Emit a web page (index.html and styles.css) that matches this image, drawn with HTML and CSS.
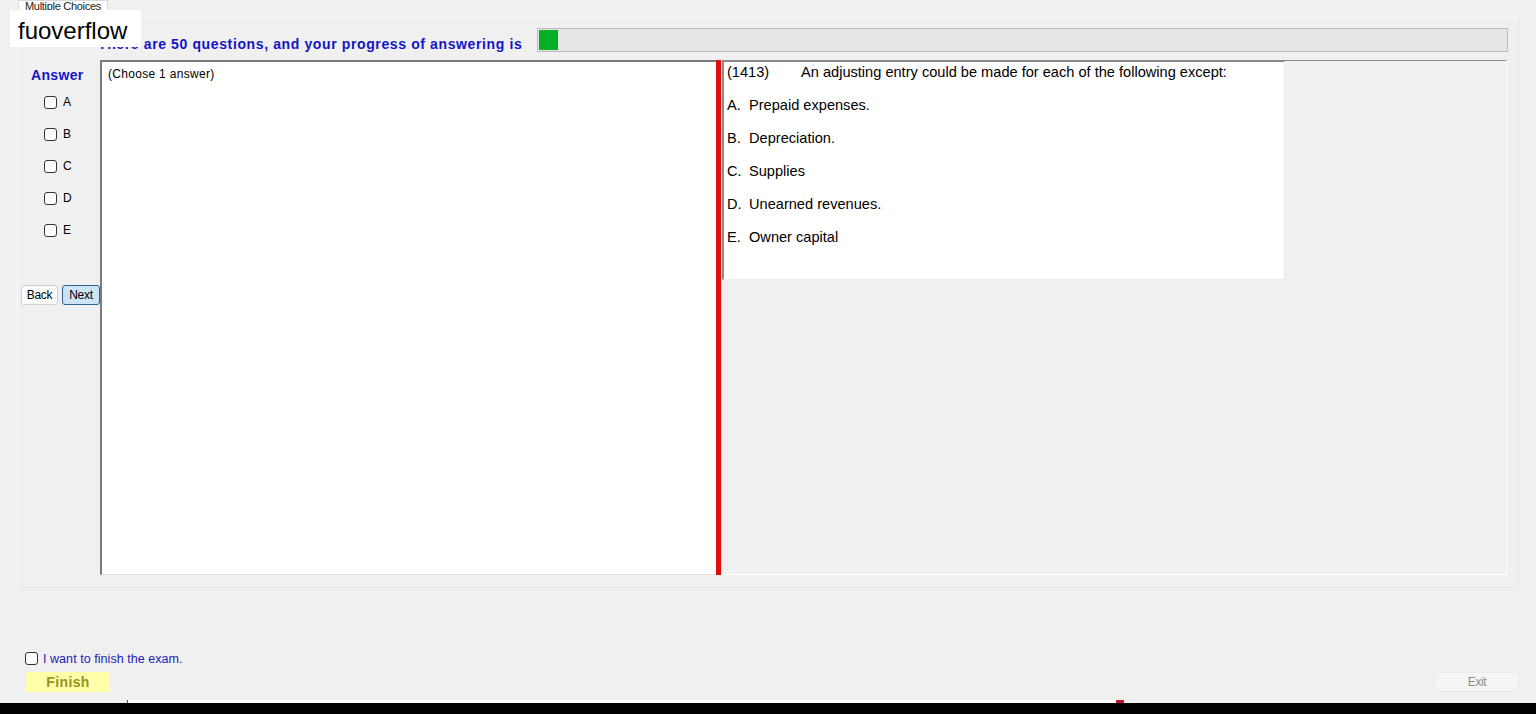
FILE: index.html
```html
<!DOCTYPE html>
<html lang="en">
<head>
    <meta charset="UTF-8">
    <title>Multiple Choices</title>
    <link rel="stylesheet" href="styles.css">
</head>
<body>
    <!-- Watermark -->
    <div class="watermark">fuoverflow</div>

    <!-- Tab strip -->
    <div class="tab-strip">
        <div class="tab">Multiple Choices</div>
    </div>

    <div class="tab-page">
        <div class="top-row">
            <h1 class="progress-label">There are 50 questions, and your progress of answering is</h1>
            <div class="progress">
                <div class="progress-fill" style="width: 19px"></div>
            </div>
        </div>

        <div class="work-row">
            <!-- Answer sidebar -->
            <div class="side">
                <h2 class="side-title">Answer</h2>
                <label class="opt"><input type="checkbox"><span>A</span></label>
                <label class="opt"><input type="checkbox"><span>B</span></label>
                <label class="opt"><input type="checkbox"><span>C</span></label>
                <label class="opt"><input type="checkbox"><span>D</span></label>
                <label class="opt"><input type="checkbox"><span>E</span></label>
                <div class="nav">
                    <button class="btn">Back</button>
                    <button class="btn btn-active">Next</button>
                </div>
            </div>

            <!-- Split container -->
            <div class="split">
                <div class="answer-pane">(Choose 1 answer)</div>
                <div class="splitter"></div>
                <div class="question-pane">
                    <div class="question-box">
                        <p class="q-line"><span class="q-num">(1413)</span>An adjusting entry could be made for each of the following except:</p>
                        <p class="q-line"><span class="q-letter">A.</span>Prepaid expenses.</p>
                        <p class="q-line"><span class="q-letter">B.</span>Depreciation.</p>
                        <p class="q-line"><span class="q-letter">C.</span>Supplies</p>
                        <p class="q-line"><span class="q-letter">D.</span>Unearned revenues.</p>
                        <p class="q-line"><span class="q-letter">E.</span>Owner capital</p>
                    </div>
                </div>
            </div>
        </div>
    </div>

    <!-- Footer -->
    <div class="footer">
        <label class="finish-check"><input type="checkbox"><span>I want to finish the exam.</span></label>
        <div class="footer-row">
            <button class="finish-btn">Finish</button>
            <button class="exit-btn">Exit</button>
        </div>
    </div>

    <div class="taskbar">
        <div class="taskbar-strip"><span class="strip-mark"></span></div>
        <div class="taskbar-bar"></div>
    </div>
</body>
</html>
```

FILE: styles.css
```css
* {
    margin: 0;
    padding: 0;
    box-sizing: border-box;
}

body {
    background-color: #f0f0f0;
    font-family: "Liberation Sans", Arial, sans-serif;
    font-size: 12px;
    color: #000;
    width: 1536px;
    height: 714px;
    overflow: hidden;
    position: relative;
}

/* Watermark */
.watermark {
    position: absolute;
    left: 10px;
    top: 10px;
    width: 131px;
    height: 37px;
    background-color: #fff;
    font-size: 24px;
    line-height: 24px;
    padding: 9px 0 0 8px;
    z-index: 10;
}

/* Tab strip */
.tab-strip {
    height: 17px;
    padding-left: 18px;
}

.tab {
    width: 90px;
    height: 17px;
    background-color: #fff;
    border: 1px solid #d9d9d9;
    border-bottom: none;
    font-size: 11px;
    line-height: 10px;
    padding-left: 6px;
    letter-spacing: -0.3px;
    color: #222;
}

/* Tab page */
.tab-page {
    margin-left: 17px;
    width: 1502px;
    height: 572px;
    border: 1px solid #fafafa;
    box-shadow: inset -1px -1px 0 #e4e4e4, 1px 1px 0 #e4e4e4;
    display: flex;
    flex-direction: column;
}

.top-row {
    display: flex;
    height: 42px;
    padding: 10px 10px 0 80px;
}

.progress-label {
    width: 439px;
    flex-shrink: 0;
    white-space: nowrap;
    font-size: 14px;
    letter-spacing: 0.62px;
    font-weight: bold;
    color: #1414c8;
    padding-top: 8px;
}

.progress {
    flex: 1;
    height: 24px;
    background-color: #e6e6e6;
    border: 1px solid #bcbcbc;
    padding: 1px;
}

.progress-fill {
    height: 100%;
    background-color: #06b025;
}

.work-row {
    display: flex;
    height: 515px;
    padding-right: 11px;
}

/* Answer sidebar */
.side {
    width: 82px;
    flex-shrink: 0;
    display: flex;
    flex-direction: column;
}

.side-title {
    font-size: 14px;
    letter-spacing: 0.35px;
    font-weight: bold;
    color: #1414c8;
    padding: 7px 0 0 13px;
    height: 29px;
}

.opt {
    display: flex;
    align-items: center;
    height: 32px;
    padding-left: 26px;
    margin-top: -3px;
    margin-bottom: 3px;
}

.opt span {
    margin-left: 6px;
}

input[type="checkbox"] {
    appearance: none;
    -webkit-appearance: none;
    width: 13px;
    height: 13px;
    border: 1px solid #333;
    border-radius: 3px;
    background-color: #fff;
}

.nav {
    display: flex;
    gap: 4px;
    margin-top: 36px;
    padding-left: 3px;
}

.btn {
    height: 20px;
    width: 37px;
    font-family: "Liberation Sans", Arial, sans-serif;
    font-size: 12px;
    letter-spacing: -0.3px;
    background-color: #fdfdfd;
    border: 1px solid #d0d0d0;
    border-radius: 3px;
    color: #000;
}

.btn-active {
    width: 38px;
    background-color: #cce4f7;
    border-color: #2c628b;
}

/* Split container */
.split {
    flex: 1;
    display: flex;
}

.answer-pane {
    width: 616px;
    background-color: #fff;
    border-top: 2px solid #7a7a7a;
    border-left: 2px solid #7a7a7a;
    border-bottom: 1px solid #e3e3e3;
    padding: 5px 0 0 6px;
    line-height: 14px;
    letter-spacing: 0.3px;
}

.splitter {
    width: 6px;
    background-color: #e00f0f;
    border-right: 1px solid #f6d0d0;
}

.question-pane {
    flex: 1;
    border-top: 1px solid #8a8a8a;
    border-right: 1px solid #fff;
    border-bottom: 1px solid #fff;
}

.question-box {
    width: 563px;
    height: 219px;
    background-color: #fff;
    border-left: 2px solid #8a8a8a;
    border-top: 1px solid #8a8a8a;
    border-right: 1px solid #ececec;
    border-bottom: 1px solid #ececec;
    padding: 0 0 0 3px;
}

.q-line {
    font-size: 14.6px;
    line-height: 20px;
    margin-bottom: 13px;
    white-space: nowrap;
}

.q-num {
    display: inline-block;
    width: 74px;
}

.q-letter {
    display: inline-block;
    width: 22px;
}

/* Footer */
.footer {
    height: 111px;
    padding: 62px 17px 0 25px;
}

.finish-check {
    display: flex;
    align-items: center;
    height: 14px;
}

.finish-check span {
    margin-left: 5px;
    margin-top: 2px;
    font-size: 12.5px;
    color: #1c1cb4;
    letter-spacing: 0.05px;
}

.footer-row {
    display: flex;
    justify-content: space-between;
    margin-top: 7px;
}

.finish-btn {
    width: 84px;
    height: 20px;
    margin-left: 1px;
    background-color: #ffffaa;
    border: none;
    font-family: "Liberation Sans", Arial, sans-serif;
    font-size: 14px;
    letter-spacing: 0.4px;
    font-weight: bold;
    color: #94941c;
}

.exit-btn {
    width: 84px;
    height: 20px;
    background-color: #f5f5f5;
    border: 1px solid #ebebeb;
    border-radius: 3px;
    font-family: "Liberation Sans", Arial, sans-serif;
    font-size: 12px;
    letter-spacing: -0.4px;
    color: #8c8c8c;
}

/* Taskbar */
.taskbar-strip {
    height: 3px;
    margin-left: 127px;
    width: 997px;
    background-color: #fff;
    border-left: 1px solid #555;
    position: relative;
}

.strip-mark {
    position: absolute;
    right: 0;
    top: 0;
    width: 8px;
    height: 3px;
    background-color: #c8102e;
}

.taskbar-bar {
    height: 12px;
    background-color: #000;
}
```
